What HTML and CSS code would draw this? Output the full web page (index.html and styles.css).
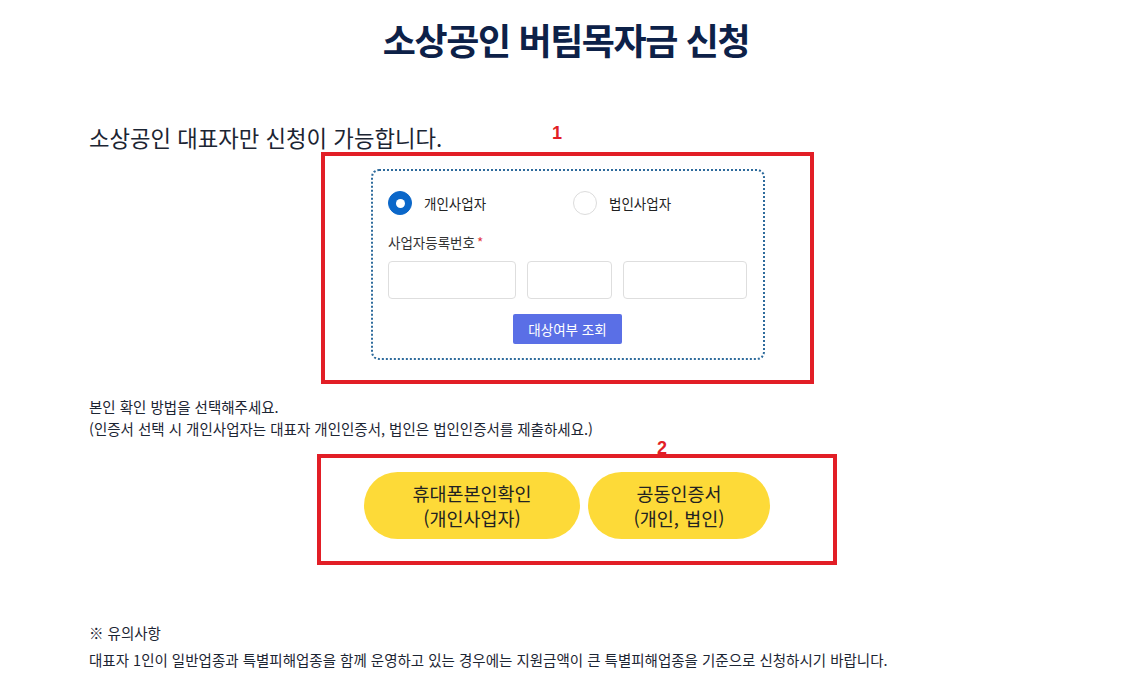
FILE: index.html
```html
<!DOCTYPE html>
<html lang="ko">
<head>
<meta charset="utf-8">
<title>소상공인 버팀목자금 신청</title>
<link rel="stylesheet" href="styles.css">
</head>
<body>
<div class="page">
  <h1 class="title">소상공인 버팀목자금 신청</h1>
  <p class="lead">소상공인 대표자만 신청이 가능합니다.</p>

  <div class="annot annot-1">
    <span class="annot-num num-1">1</span>
    <div class="check-box">
      <div class="radio-row">
        <label class="radio-item">
          <span class="radio checked"></span>
          <span class="radio-label">개인사업자</span>
        </label>
        <label class="radio-item">
          <span class="radio"></span>
          <span class="radio-label">법인사업자</span>
        </label>
      </div>
      <div class="field-label">사업자등록번호<span class="req">*</span></div>
      <div class="inputs">
        <span class="input w1"></span>
        <span class="input w2"></span>
        <span class="input w3"></span>
      </div>
      <div class="btn-row">
        <button class="btn-check">대상여부 조회</button>
      </div>
    </div>
  </div>

  <p class="guide">본인 확인 방법을 선택해주세요.<br>(인증서 선택 시 개인사업자는 대표자 개인인증서, 법인은 법인인증서를 제출하세요.)</p>

  <div class="annot annot-2">
    <span class="annot-num num-2">2</span>
    <div class="auth-row">
      <button class="btn-auth auth-phone">휴대폰본인확인<br>(개인사업자)</button>
      <button class="btn-auth auth-cert">공동인증서<br>(개인, 법인)</button>
    </div>
  </div>

  <div class="notice">
    <p class="notice-title">※ 유의사항</p>
    <p class="notice-text">대표자 1인이 일반업종과 특별피해업종을 함께 운영하고 있는 경우에는 지원금액이 큰 특별피해업종을 기준으로 신청하시기 바랍니다.</p>
  </div>
</div>
</body>
</html>
```

FILE: styles.css
```css
* { box-sizing: border-box; }
html, body { margin: 0; padding: 0; background: #fff; }
body {
  font-family: "Noto Sans CJK KR", "Noto Sans", sans-serif;
  color: #222;
}
.page { width: 1132px; height: 676px; overflow: hidden; }

.title {
  margin: 0;
  padding-top: 16px;
  height: 64px;
  text-align: center;
  font-size: 36px;
  line-height: 46px;
  letter-spacing: -1.4px;
  font-weight: 700;
  color: #0d2148;
}

.lead {
  margin: 58px 0 0 89px;
  font-size: 22.3px;
  line-height: 30px;
  color: #1c2533;
}

.annot {
  position: relative;
  border: 4px solid #e21e26;
}
.annot-num {
  position: absolute;
  color: #e21e26;
  font-family: "Liberation Sans", Arial, sans-serif;
  font-weight: 700;
  font-size: 18px;
  line-height: 20px;
}
.annot-1 {
  margin: 0 0 0 321px;
  width: 493px;
  height: 232px;
  padding: 13px 0 0 46px;
}
.num-1 { left: 227px; top: -33px; }

.check-box {
  width: 394px;
  height: 191px;
  border: 2px dotted #2e6b9c;
  border-radius: 8px;
  padding: 20px 16px 0 15px;
}
.radio-row { display: flex; height: 24px; }
.radio-item { display: flex; align-items: center; flex: 0 0 185px; gap: 12px; }
.radio {
  width: 24px; height: 24px; border-radius: 50%;
  border: 1px solid #dcdcdc; background: #fff;
  display: flex; align-items: center; justify-content: center;
  flex: 0 0 24px;
}
.radio.checked { background: #0b67c9; border-color: #0b67c9; }
.radio.checked::after {
  content: ""; width: 9px; height: 9px; border-radius: 50%; background: #fff;
}
.radio-label { font-size: 13.5px; color: #222; white-space: nowrap; }

.field-label {
  margin-top: 17px;
  font-size: 13.5px;
  line-height: 20px;
  color: #333;
}
.req { color: #e0323a; margin-left: 2px; }

.inputs { display: flex; gap: 11px; margin-top: 9px; }
.input {
  display: block; height: 38px;
  border: 1px solid #dedede; border-radius: 4px; background: #fff;
}
.w1 { width: 128px; }
.w2 { width: 85px; }
.w3 { width: 124px; }

.btn-row { display: flex; justify-content: center; margin-top: 15px; }
.btn-check {
  width: 109px; height: 30px;
  border: 0; border-radius: 2px;
  background: #5a6fe6; color: #fff;
  font-family: inherit; font-size: 13.5px;
  padding: 0;
}

.guide {
  margin: 12px 0 0 89px;
  font-size: 14.5px;
  line-height: 22px;
  color: #1c2533;
}

.annot-2 {
  margin: 14px 0 0 317px;
  width: 520px;
  height: 111px;
  padding: 14px 0 0 43px;
}
.num-2 { left: 336px; top: -20px; }

.auth-row { display: flex; gap: 8px; }
.btn-auth {
  height: 67px;
  border: 0; border-radius: 34px;
  background: #fdda38; color: #222;
  font-family: inherit; font-size: 18.5px; line-height: 25px;
  padding: 0;
}
.auth-phone { width: 216px; }
.auth-cert { width: 182px; }

.notice { margin: 54px 0 0 89px; }
.notice p { margin: 0; font-size: 14.5px; line-height: 27px; color: #1c2533; }
```
